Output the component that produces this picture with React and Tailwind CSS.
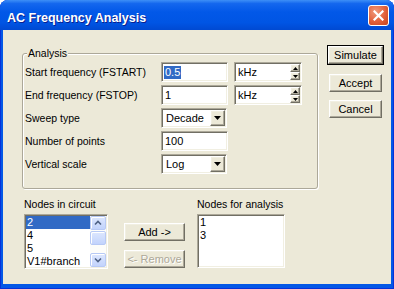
import React from "react";

const sunken =
  "bg-white border border-t-[#ACA899] border-l-[#ACA899] border-b-white border-r-white shadow-[inset_1px_1px_0_#716F64,inset_-1px_-1px_0_#F1EFE2]";
const raised =
  "bg-[#ECE9D8] border border-t-white border-l-white border-b-[#716F64] border-r-[#716F64] shadow-[inset_-1px_-1px_0_#ACA899,inset_1px_1px_0_#F1EFE2]";

function DownTri() {
  return (
    <svg width="7" height="4" viewBox="0 0 7 4">
      <path d="M0 0H7L3.5 4Z" fill="#000" />
    </svg>
  );
}
function UpTri() {
  return (
    <svg width="5" height="3" viewBox="0 0 5 3">
      <path d="M0 3H5L2.5 0Z" fill="#000" />
    </svg>
  );
}
function DownTriSmall() {
  return (
    <svg width="5" height="3" viewBox="0 0 5 3">
      <path d="M0 0H5L2.5 3Z" fill="#000" />
    </svg>
  );
}

function TextInput({ children }) {
  return (
    <div className={`${sunken} w-[67px] h-[20px] flex items-center pl-[2px] text-[11px]`}>
      {children}
    </div>
  );
}

function Select({ value }) {
  return (
    <div className={`${sunken} w-[66px] h-[20px] flex items-stretch p-[1px] text-[11px]`}>
      <div className="flex-1 flex items-center pl-[3px]">{value}</div>
      <div className={`${raised} w-[15px] flex items-center justify-center`}>
        <DownTri />
      </div>
    </div>
  );
}

function UnitSpin() {
  return (
    <div className={`${sunken} ml-[6px] w-[68px] h-[20px] flex items-stretch p-[1px] text-[11px]`}>
      <div className="flex-1 flex items-center pl-[2px]">kHz</div>
      <div className="w-[10px] flex flex-col">
        <div className={`${raised} flex-1 flex items-center justify-center`}>
          <UpTri />
        </div>
        <div className={`${raised} flex-1 flex items-center justify-center`}>
          <DownTriSmall />
        </div>
      </div>
    </div>
  );
}

function Row({ label, children }) {
  return (
    <div className="flex items-center h-[20px] mt-[3px]">
      <div className="w-[136px] text-[10.5px] leading-[12px]">{label}</div>
      {children}
    </div>
  );
}

function Chevron({ up }) {
  return (
    <svg width="8" height="6" viewBox="0 0 8 6">
      <path
        d={up ? "M1 4.5L4 1.5L7 4.5" : "M1 1.5L4 4.5L7 1.5"}
        fill="none"
        stroke="#4D6185"
        strokeWidth="1.6"
      />
    </svg>
  );
}

const sbBtn =
  "rounded-[2px] border border-[#B7C9F5] bg-[linear-gradient(to_bottom,#DDE7FE,#C2D3FC)] shadow-[inset_1px_1px_0_#FFFFFF] flex items-center justify-center";

function Scrollbar() {
  return (
    <div className="w-[16px] flex flex-col bg-[#FDFDFA]">
      <div className={`${sbBtn} h-[14px]`}>
        <Chevron up />
      </div>
      <div className={`${sbBtn} h-[14px] mt-[1px]`}></div>
      <div className="flex-1" />
      <div className={`${sbBtn} h-[14px]`}>
        <Chevron />
      </div>
    </div>
  );
}

function CloseButton() {
  return (
    <div className="w-[21px] h-[21px] rounded-[3px] border border-white bg-[radial-gradient(circle_at_35%_30%,#F09A7C,#E2603A_55%,#C4421C)] flex items-center justify-center">
      <svg width="11" height="11" viewBox="0 0 11 11">
        <path d="M1.5 1.5L9.5 9.5M9.5 1.5L1.5 9.5" stroke="#fff" strokeWidth="2.2" strokeLinecap="square" />
      </svg>
    </div>
  );
}

export default function App() {
  return (
    <div className="w-[394px] h-[289px] bg-white font-['Liberation_Sans',Arial,sans-serif] text-black">
      <div className="w-full h-full flex flex-col rounded-t-[8px] overflow-hidden bg-[#0458E6] shadow-[inset_1px_0_0_#0831D9,inset_-1px_0_0_#0831D9,inset_0_-1px_0_#0831D9]">
        {/* title bar */}
        <div className="h-[30px] flex items-center justify-between pl-[7px] pr-[5px] bg-[linear-gradient(to_bottom,#3D8FF7_0%,#1467EE_12%,#0258E8_40%,#0055E4_75%,#0049D2_100%)]">
          <span className="mt-[7px] text-white font-bold text-[12.5px] leading-[15px] [text-shadow:1px_1px_0_#0A1F8F]">
            AC Frequency Analysis
          </span>
          <CloseButton />
        </div>

        {/* body */}
        <div className="flex-1 mx-[3px] mb-[5px] bg-[#ECE9D8] flex flex-col">
          <div className="flex items-start">
            <fieldset className="ml-[19px] mt-[17px] w-[296px] border border-[#ACA899] rounded-[3px] pl-[2px] pb-[14px] shadow-[inset_1px_1px_0_#FFFFFF,1px_1px_0_#FFFFFF]">
              <legend className="ml-[2px] px-[1px] text-[10.5px] leading-[12px] bg-[#ECE9D8]">
                Analysis
              </legend>
              <Row label="Start frequency (FSTART)">
                <TextInput>
                  <span className="bg-[#316AC5] text-white px-[1px] leading-[13px]">0.5</span>
                </TextInput>
                <UnitSpin />
              </Row>
              <Row label="End frequency (FSTOP)">
                <TextInput>
                  <span className="px-[1px]">1</span>
                </TextInput>
                <UnitSpin />
              </Row>
              <Row label="Sweep type">
                <Select value="Decade" />
              </Row>
              <Row label="Number of points">
                <TextInput>
                  <span className="px-[1px]">100</span>
                </TextInput>
              </Row>
              <Row label="Vertical scale">
                <Select value="Log" />
              </Row>
            </fieldset>

            <div className="ml-[9px] mt-[15px] flex flex-col items-start text-[11px]">
              <div className="w-[57px] h-[20px] border border-black flex">
                <div className={`${raised} flex-1 flex items-center justify-center`}>Simulate</div>
              </div>
              <div className={`${raised} ml-[2px] mt-[9px] w-[53px] h-[18px] flex items-center justify-center`}>
                Accept
              </div>
              <div className={`${raised} ml-[2px] mt-[8px] w-[53px] h-[18px] flex items-center justify-center`}>
                Cancel
              </div>
            </div>
          </div>

          <div className="flex items-start ml-[21px] mt-[9px]">
            <div className="w-[84px] flex flex-col">
              <div className="text-[10.5px] leading-[12px]">Nodes in circuit</div>
              <div className={`${sunken} mt-[4px] h-[55px] flex p-[1px]`}>
                <div className="flex-1 text-[11px] leading-[13px]">
                  <div className="bg-[#316AC5] text-white pl-[1px]">2</div>
                  <div className="pl-[1px]">4</div>
                  <div className="pl-[1px]">5</div>
                  <div className="pl-[1px] whitespace-nowrap">V1#branch</div>
                </div>
                <Scrollbar />
              </div>
            </div>

            <div className="ml-[16px] mt-[25px] w-[61px] flex flex-col text-[11px]">
              <div className={`${raised} h-[18px] flex items-center justify-center`}>Add -&gt;</div>
              <div className={`${raised} mt-[9px] h-[18px] flex items-center justify-center text-[#ACA899] [text-shadow:1px_1px_0_#FFFFFF]`}>
                &lt;- Remove
              </div>
            </div>

            <div className="ml-[12px] w-[88px] flex flex-col">
              <div className="text-[10.5px] leading-[12px] whitespace-nowrap">Nodes for analysis</div>
              <div className={`${sunken} mt-[4px] h-[54px] p-[1px] text-[11px] leading-[13px]`}>
                <div className="pl-[1px]">1</div>
                <div className="pl-[1px]">3</div>
              </div>
            </div>
          </div>
        </div>
      </div>
    </div>
  );
}
